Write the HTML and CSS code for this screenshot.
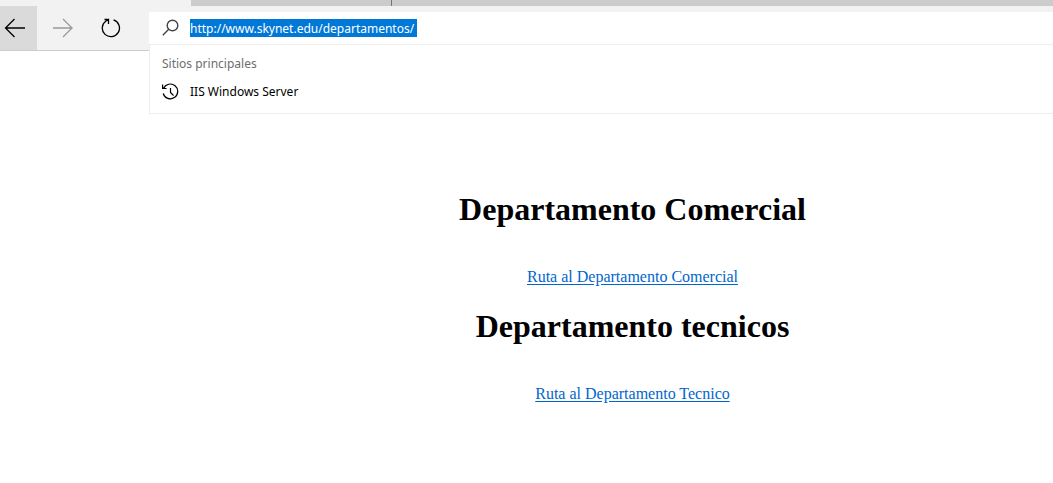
FILE: index.html
```html
<!DOCTYPE html>
<html lang="es">
<head>
<meta charset="utf-8">
<title>Departamentos</title>
<link rel="stylesheet" href="styles.css">
</head>
<body>
<header class="browser">
  <div class="tabs"><div class="tab-active"></div><div class="tab"></div><div class="tab-rest"></div></div>
  <div class="toolbar">
    <nav class="nav">
      <button class="nav-btn back" aria-label="Atrás">
        <svg width="22" height="20" viewBox="0 0 22 20"><path d="M1.500 10H21M10.500 1 1.500 10l9 9"/></svg>
      </button>
      <button class="nav-btn forward" aria-label="Adelante">
        <svg width="22" height="20" viewBox="0 0 22 20"><path d="M1 10h19.500M11 1l9 9-9 9"/></svg>
      </button>
      <button class="nav-btn reload" aria-label="Actualizar">
        <svg width="20" height="20" viewBox="0 0 20 20"><path d="M12.500 1.900A8.600 8.600 0 1 1 5 3L7.500 1.500M3.500 1.500h4v4.500"/></svg>
      </button>
    </nav>
    <div class="address">
      <div class="field">
        <svg class="icon search" width="18" height="18" viewBox="0 0 18 18"><circle cx="10.500" cy="6.500" r="5.300"/><path d="M6.700 10.300.8 16.200"/></svg>
        <input class="url" type="text" aria-label="Dirección" value="http://www.skynet.edu/departamentos/">
      </div>
      <div class="suggestions">
        <p class="caption">Sitios principales</p>
        <a class="suggestion" href="#">
          <svg class="icon" width="18" height="18" viewBox="0 0 18 18"><path d="M1.500 5.500A7.400 7.400 0 1 1 1.200 10.500M.6 1.500v4h4M8.500 5v4.500l3 3"/></svg>
          <span>IIS Windows Server</span>
        </a>
      </div>
    </div>
  </div>
</header>
<main class="page">
  <h1 class="title">Departamento Comercial</h1>
  <p class="route"><a href="#">Ruta al Departamento Comercial</a></p>
  <h1 class="title">Departamento tecnicos</h1>
  <p class="route"><a href="#">Ruta al Departamento Tecnico</a></p>
</main>
</body>
</html>
```
FILE: styles.css
```css
* { box-sizing: border-box; }
body {
  margin: 0;
  background: #fff;
  color: #000;
  font-family: "Liberation Serif", serif;
}
svg { display: block; fill: none; stroke: currentColor; }
.browser {
  background: #f2f2f2;
  font: 12px/18px "Noto Sans", sans-serif;
}
.tabs { display: flex; height: 6px; }
.tab-active { width: 191px; }
.tab { width: 201px; background: #ccc; border-right: 1px solid #767676; }
.tab-rest { flex: 1; background: #ccc; }
.toolbar { display: flex; height: 45px; border-bottom: 1px solid #ccc; }
.nav { display: flex; width: 149px; }
.nav-btn {
  display: flex;
  align-items: center;
  justify-content: center;
  width: 48px;
  padding: 0;
  border: 0;
  background: none;
  color: #000;
}
.nav-btn svg { stroke-width: 1.3; }
.back { width: 37px; padding-right: 7px; background: #dadada; }
.forward { width: 52px; color: #999; }
.reload { width: 44px; }
.address { position: relative; flex: 1; padding-top: 6px; }
.field {
  display: flex;
  align-items: center;
  gap: 10px;
  height: 32px;
  padding-left: 13px;
  background: #fff;
}
.icon { flex: none; stroke-width: 1.2; }
.search { color: #444; stroke-width: 1.4; }
.url {
  width: 227px;
  height: 18px;
  padding: 1px 0 0;
  border: 0;
  outline: 0;
  background: #0078d7;
  color: #fff;
  font: 12px/17px "Noto Sans", sans-serif;
}
.suggestions {
  position: absolute;
  top: 38px;
  left: 0;
  right: 0;
  padding: 10px 12px 12px;
  border: 1px solid #eee;
  border-right: 0;
  background: #fff;
}
.caption { margin: 0 0 10px; color: #6d6d6d; }
.suggestion {
  display: flex;
  align-items: center;
  gap: 10px;
  color: #000;
  text-decoration: none;
}
.page { padding: 140px 0 20px 212px; text-align: center; }
.title { margin: 0 0 40px; font-size: 32px; line-height: 37px; }
.route { margin: 0 0 22px; font-size: 16px; line-height: 18px; }
.route a { color: #0066cc; text-underline-offset: 2px; }
```
